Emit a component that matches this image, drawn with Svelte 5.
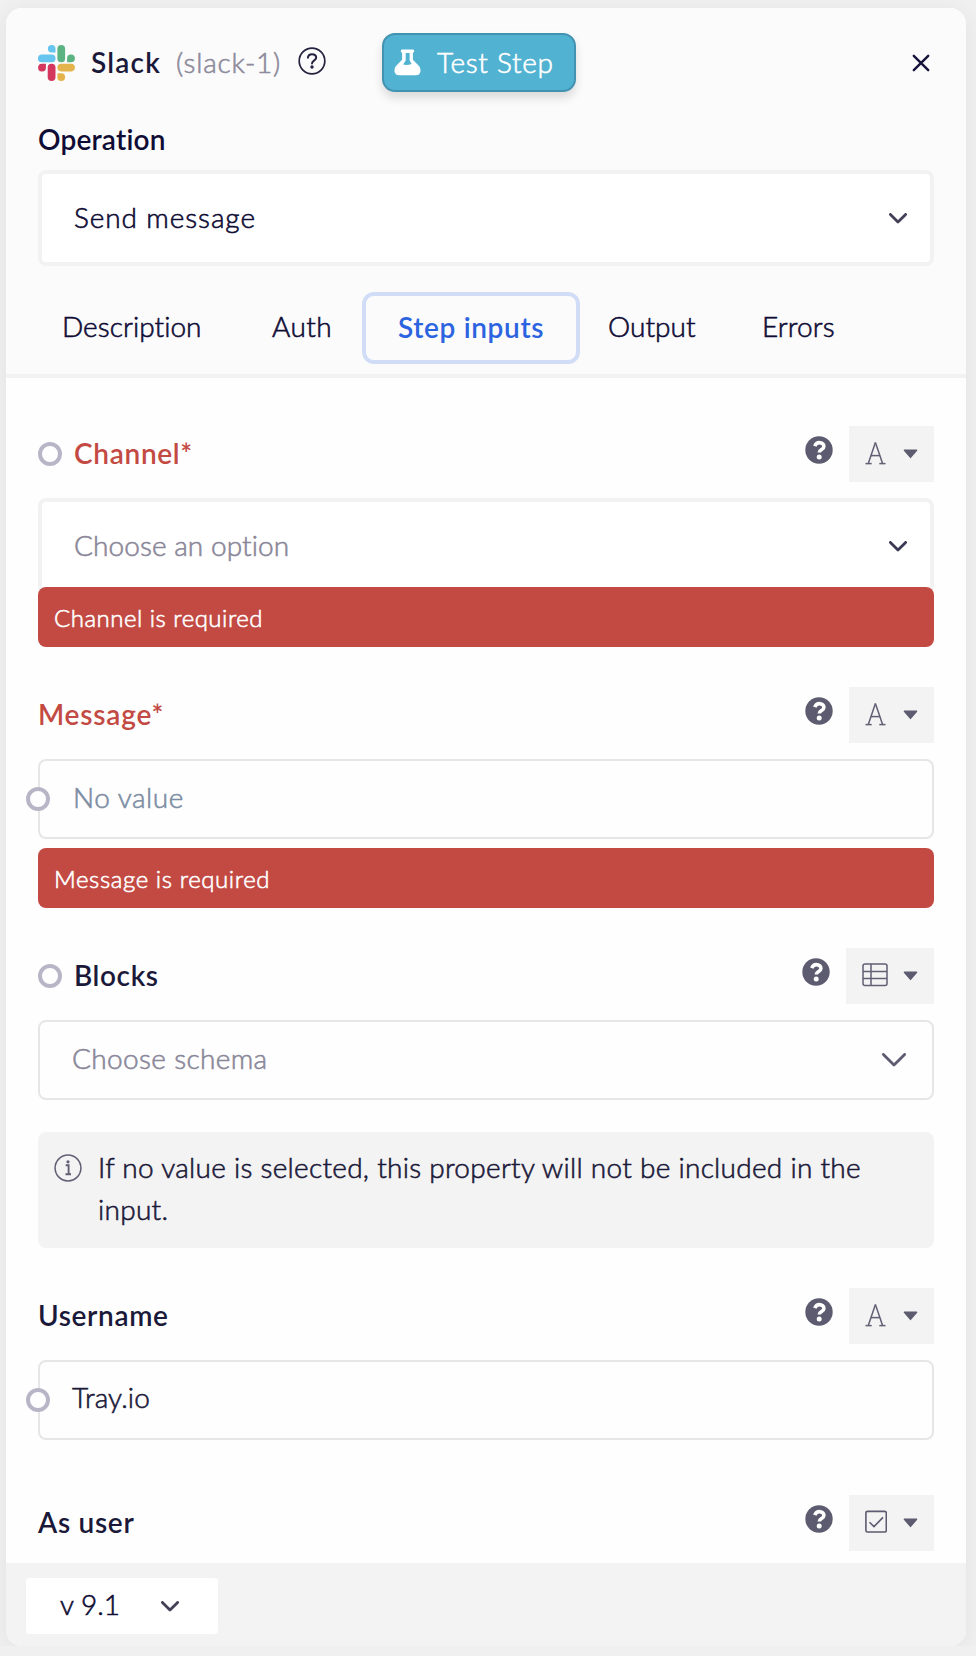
<script>
  const tabs = [
    { name: 'Description', x: 24, ls: 0.05 },
    { name: 'Auth', x: 41, ls: 0.4 },
    { name: 'Step inputs', x: 32, ls: 0.65 },
    { name: 'Output', x: 28, ls: 0.05 },
    { name: 'Errors', x: 41, ls: 0.1 }
  ];
</script>

{#snippet chevron(w, h, sw, color)}
  <svg class="chev" width={w} height={h} viewBox="0 0 {w} {h}">
    <path d="M{sw / 2} {sw / 2} L{w / 2} {h - sw * 0.7} L{w - sw / 2} {sw / 2}" fill="none" stroke={color} stroke-width={sw} stroke-linecap="round" stroke-linejoin="round" />
  </svg>
{/snippet}

{#snippet head(label, ls, kind, ring, error)}
  <div class="head">
    {#if ring}<span class="ring"></span>{/if}
    <span class="label" class:error style="letter-spacing:{ls}px">{label}</span>
    <svg class="qmark" width="28" height="28" viewBox="0 0 28 28">
      <circle cx="14" cy="14" r="13.7" fill="#5d5b6f" />
      <path d="M9.8 10.1 C10.8 7.2 12.4 6.6 14.3 6.6 C17 6.6 18.9 8.2 18.9 10.5 C18.9 13.6 14.3 13.4 14.3 16.5" fill="none" stroke="#fff" stroke-width="3.6" />
      <circle cx="14.2" cy="21" r="2.5" fill="#fff" />
    </svg>
    <button class="type" class:wide={kind === 'table'}>
      {#if kind === 'text'}
        <svg width="21" height="24" viewBox="0 0 21 24" fill="none" stroke="#625f74" stroke-width="1.5">
          <line x1="3.3" y1="22.6" x2="10.4" y2="1.6" />
          <line x1="10.4" y1="1.6" x2="17.6" y2="22.6" />
          <line x1="5.8" y1="14.6" x2="15" y2="14.6" />
          <line x1="0.5" y1="22.6" x2="6.7" y2="22.6" />
          <line x1="14.3" y1="22.6" x2="20.5" y2="22.6" />
        </svg>
      {:else if kind === 'table'}
        <svg width="26" height="24" viewBox="0 0 26 24" fill="none" stroke="#625f74" stroke-width="1.5">
          <rect x="1" y="1" width="24" height="21.5" rx="2" />
          <path d="M1 8.6 H25 M1 15.5 H25 M9 1 V22.5" />
        </svg>
      {:else}
        <svg width="22" height="24" viewBox="0 0 22 24" fill="none" stroke="#5d5b6f" stroke-width="1.6">
          <rect x="0.9" y="1.4" width="20.4" height="20.6" rx="1.6" />
          <path d="M4.5 12.2 L9 16.6 L18 7.4" />
        </svg>
      {/if}
      <svg class="caret" width="15" height="10" viewBox="0 0 15 10">
        <path d="M1.4 1.2 H13.6 L7.5 8.4 Z" fill="#5d5b6f" stroke="#5d5b6f" stroke-width="1.4" stroke-linejoin="round" />
      </svg>
    </button>
  </div>
{/snippet}

<div class="panel">
  <header>
    <div class="title">
      <svg class="logo" width="37" height="36" viewBox="0 0 37 36">
        <g fill="#66c5ef"><rect x="0" y="9.6" width="17.5" height="7.7" rx="3.85" /><path d="M17.5 7.6 H13.6 A3.8 3.8 0 1 1 17.5 3.8 Z" /></g>
        <g fill="#5bb381"><rect x="19.4" y="0" width="7.7" height="17.3" rx="3.85" /><path d="M29.1 17.3 V13.5 A3.9 3.9 0 1 1 33 17.3 Z" /></g>
        <g fill="#d3375d"><rect x="9.7" y="18.7" width="7.8" height="17.3" rx="3.9" /><path d="M7.9 18.7 V22.4 A3.9 3.9 0 1 1 4 18.7 Z" /></g>
        <g fill="#e5b34b"><rect x="19.4" y="18.8" width="17.5" height="7.6" rx="3.8" /><path d="M19.4 28.3 H23.2 A3.85 3.85 0 1 1 19.4 32.1 Z" /></g>
      </svg>
      <strong>Slack</strong>
      <span class="id">(slack-1)</span>
      <svg class="help" width="28" height="28" viewBox="0 0 28 28" fill="none" stroke="#24223f">
        <circle cx="14" cy="14" r="12.8" stroke-width="1.7" />
        <path d="M9.9 10.7 C10.2 8.2 12 7.3 14 7.3 C16.4 7.3 18.2 8.7 18.2 10.8 C18.2 13.5 14 13.4 14 16.6" stroke-width="2" stroke-linecap="round" />
        <circle cx="14" cy="20" r="1.7" fill="#24223f" stroke="none" />
      </svg>
      <button class="test">
        <svg width="27" height="27" viewBox="0 0 27 27" fill="#fff">
          <path fill-rule="evenodd" d="M8 0.4 H19 Q20.2 0.4 20.2 2 Q20.2 3.6 18.9 3.7 V10.8 L25.2 17.3 Q26.8 19.2 26.6 22 Q26 26.2 22 26.2 H5 Q1 26.2 0.4 22 Q0.2 19.2 1.8 17.3 L8.1 10.8 V3.7 Q6.8 3.6 6.8 2 Q6.8 0.4 8 0.4 Z M11.7 4 V11.5 L9.1 15.6 Q13 16.6 17.6 15 L15.6 11.5 V4 Z" />
        </svg>
        <span>Test Step</span>
      </button>
      <svg class="close" width="18" height="18" viewBox="0 0 18 18">
        <path d="M1.8 1.8 L16.2 16.2 M16.2 1.8 L1.8 16.2" stroke="#16143a" stroke-width="2.4" stroke-linecap="round" />
      </svg>
    </div>
    <div class="op">Operation</div>
    <div class="select">
      <span style="letter-spacing:0.9px">Send message</span>
      {@render chevron(18, 11, 2.8, '#434057')}
    </div>
    <nav>
      {#each tabs as t, i}
        <span class="tab" class:active={i === 2} style="letter-spacing:{t.ls}px;--x:{t.x}px">{t.name}</span>
      {/each}
    </nav>
  </header>

  <main>
    <section>
      {@render head('Channel*', 0.7, 'text', true, true)}
      <div class="select muted">
        <span style="letter-spacing:0.08px">Choose an option</span>
        {@render chevron(18, 11, 2.8, '#3c3955')}
      </div>
      <div class="alert over" style="letter-spacing:0.5px">Channel is required</div>
    </section>
    <section>
      {@render head('Message*', 0.8, 'text', false, true)}
      <div class="input empty">
        <span class="ring pin"></span>
        <span style="letter-spacing:0.5px">No value</span>
      </div>
      <div class="alert" style="letter-spacing:0.6px">Message is required</div>
    </section>
    <section>
      {@render head('Blocks', 0.6, 'table', true, false)}
      <div class="input schema">
        <span style="letter-spacing:0.35px">Choose schema</span>
        {@render chevron(24, 14, 2.8, '#5d5b6f')}
      </div>
      <div class="info">
        <svg width="28" height="28" viewBox="0 0 28 28" fill="none" stroke="#615f74">
          <circle cx="14" cy="14" r="12.9" stroke-width="1.5" />
          <path d="M11.7 11.2 H14.6 V20 M11.5 20.3 H17" stroke-width="1.9" />
          <circle cx="14" cy="7.8" r="1.6" fill="#615f74" stroke="none" />
        </svg>
        <p>If no value is selected, this property will not be included in the input.</p>
      </div>
    </section>
    <section class="user">
      {@render head('Username', 0.65, 'text', false, false)}
      <div class="input value">
        <span class="ring pin"></span>
        <span style="letter-spacing:0.1px">Tray.io</span>
      </div>
    </section>
    <section>
      {@render head('As user', 0.7, 'check', false, false)}
    </section>
  </main>

  <footer>
    <div class="version">
      <span>v 9.1</span>
      {@render chevron(18, 11, 2.8, '#434057')}
    </div>
  </footer>
</div>

<style>
  :global(body) {
    background: #f0f0f0;
    overflow: hidden;
  }
  .panel {
    box-sizing: border-box;
    width: 960px;
    height: 1638px;
    margin: 8px 0 0 6px;
    border-radius: 16px;
    overflow: hidden;
    display: flex;
    flex-direction: column;
    background: #fefefe;
    box-shadow: 0 4px 24px rgba(0, 0, 0, 0.06);
    font: 300 28px/34px Lato, 'Noto Sans', sans-serif;
    font-variant-ligatures: none;
    -webkit-text-stroke: 0.6px currentColor;
    color: #1b1939;
  }
  button {
    font: inherit;
    border: 0;
    padding: 0;
    letter-spacing: inherit;
    -webkit-text-stroke: inherit;
  }
  svg {
    flex: none;
    display: block;
  }
  header {
    box-sizing: border-box;
    background: #fbfbfb;
    border-bottom: 4px solid #f2f2f2;
    height: 370px;
    padding: 25px 32px 0;
    flex: none;
    color: #0f0c35;
  }
  .title {
    display: flex;
    align-items: center;
    height: 59px;
  }
  strong,
  .op,
  .label,
  .tab.active {
    font-weight: 600;
    -webkit-text-stroke: 0;
  }
  strong {
    margin-left: 16px;
    padding-bottom: 1px;
    width: 85px;
    letter-spacing: 1.2px;
    color: #1b1939;
  }
  .id {
    width: 122px;
    padding-bottom: 1px;
    letter-spacing: 0.8px;
    color: #8d8a9b;
  }
  .help {
    margin-bottom: 4px;
  }
  .test {
    box-sizing: border-box;
    margin-left: 56px;
    width: 194px;
    height: 59px;
    border: 2px solid #4292b1;
    border-radius: 13px;
    background: #52b2d1;
    box-shadow: 0 6px 10px rgba(0, 0, 0, 0.13);
    color: #fff;
    display: flex;
    align-items: center;
    padding-left: 10px;
    gap: 16px;
    letter-spacing: 0.7px;
  }
  .test span {
    padding-bottom: 2px;
  }
  .close {
    margin-left: auto;
    margin-right: 4px;
    margin-top: 1px;
  }
  .op {
    margin-top: 30px;
    height: 33px;
    letter-spacing: 0.2px;
  }
  .select {
    box-sizing: border-box;
    height: 96px;
    border: 4px solid #f2f2f2;
    border-radius: 8px;
    background: #fff;
    display: flex;
    align-items: center;
    justify-content: space-between;
    padding: 0 23px 0 32px;
  }
  header .select {
    margin-top: 15px;
  }
  .select span {
    padding-bottom: 3px;
  }
  .muted {
    color: #8a8799;
  }
  nav {
    display: flex;
    height: 72px;
    margin-top: 26px;
    align-items: center;
  }
  .tab {
    box-sizing: border-box;
    padding: 0 0 4px var(--x);
    line-height: 69px;
    height: 72px;
    white-space: nowrap;
  }
  .tab:first-child {
    width: 193px;
  }
  .tab:nth-child(2) {
    width: 131px;
  }
  .tab.active {
    width: 218px;
    border: 4px solid #d1ddf6;
    border-radius: 12px;
    line-height: 62px;
    color: #2c63e0;
  }
  .tab:nth-child(4) {
    width: 141px;
  }
  main {
    flex: 1;
    min-height: 0;
    padding: 48px 32px 0;
  }
  section {
    margin-bottom: 40px;
  }
  .user {
    margin-bottom: 55px;
  }
  .head {
    display: flex;
    align-items: center;
    height: 56px;
    margin-bottom: 16px;
  }
  .ring {
    box-sizing: border-box;
    width: 24px;
    height: 24px;
    border: 4px solid #b8b6c6;
    border-radius: 50%;
    background: #fefefe;
    flex: none;
    margin-right: 12px;
  }
  .label {
    padding-bottom: 2px;
  }
  .error {
    color: #c34a43;
  }
  .qmark {
    margin: 0 16px 8px auto;
  }
  .type {
    width: 85px;
    height: 56px;
    background: #f3f3f3;
    display: flex;
    align-items: center;
    justify-content: space-between;
    box-sizing: border-box;
    padding: 0 16px 3px 16px;
  }
  .wide {
    width: 88px;
  }
  .caret {
    margin-top: 2px;
  }
  .alert {
    box-sizing: border-box;
    height: 60px;
    line-height: 60px;
    padding-top: 1px;
    margin-top: 9px;
    border-radius: 8px;
    background: #c34a43;
    color: #fff;
    font-size: 24px;
    padding-left: 16px;
  }
  .over {
    position: relative;
    margin-top: -7px;
  }
  .input {
    position: relative;
    box-sizing: border-box;
    height: 80px;
    border: 2px solid #e6e6e6;
    border-radius: 8px;
    display: flex;
    align-items: center;
    padding: 0 26px 4px 33px;
  }
  .pin {
    position: absolute;
    left: -14px;
    top: 26px;
  }
  .empty {
    color: #7c8da3;
  }
  .schema {
    color: #8a8799;
    justify-content: space-between;
    padding-left: 32px;
  }
  .schema :global(svg) {
    margin-top: 4px;
  }
  .value {
    padding-bottom: 7px;
    padding-left: 32px;
  }
  .info {
    box-sizing: border-box;
    display: flex;
    height: 116px;
    margin-top: 32px;
    border-radius: 8px;
    background: #f3f3f3;
    padding: 14px 16px;
  }
  .info svg {
    margin: 8px 16px 0 0;
  }
  .info p {
    margin: 0;
    width: 780px;
    line-height: 42px;
    letter-spacing: 0.28px;
  }
  footer {
    box-sizing: border-box;
    flex: none;
    height: 83px;
    background: #f3f3f3;
    padding: 15px 20px;
  }
  .version {
    box-sizing: border-box;
    width: 192px;
    height: 56px;
    border-radius: 4px;
    background: #fff;
    color: #0f0c35;
    display: flex;
    align-items: center;
    justify-content: space-between;
    padding: 0 39px 0 34px;
  }
  .version span {
    padding-bottom: 4px;
  }
</style>
